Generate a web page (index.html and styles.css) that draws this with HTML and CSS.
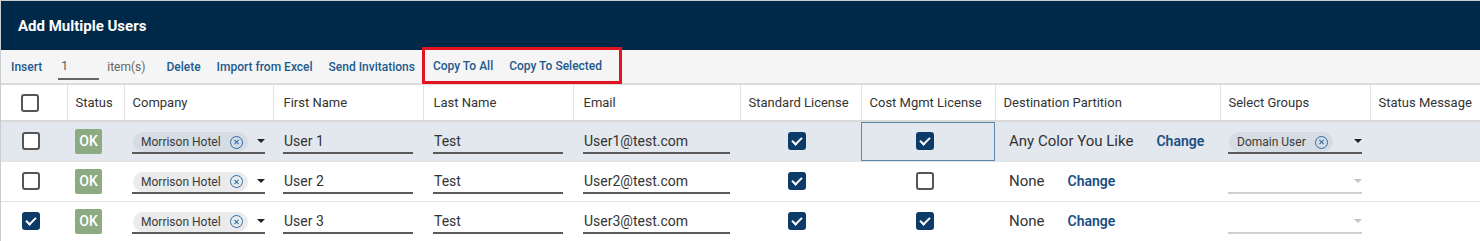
FILE: index.html
```html
<!DOCTYPE html>
<html lang="en">
<head>
    <meta charset="UTF-8">
    <title>Add Multiple Users</title>
    <link rel="stylesheet" href="styles.css">
</head>
<body>

<div class="dialog">
    <div class="titlebar">Add Multiple Users</div>

    <div class="toolbar">
        <a class="tool-link first">Insert</a>
        <span class="count-input">1</span>
        <span class="items-label">item(s)</span>
        <a class="tool-link">Delete</a>
        <a class="tool-link">Import from Excel</a>
        <a class="tool-link">Send Invitations</a>
        <span class="highlight-box">
            <a class="tool-link">Copy To All</a>
            <a class="tool-link">Copy To Selected</a>
        </span>
    </div>

    <table class="grid">
        <colgroup>
            <col style="width:66px">
            <col style="width:57px">
            <col style="width:149px">
            <col style="width:150px">
            <col style="width:150px">
            <col style="width:167px">
            <col style="width:121px">
            <col style="width:134px">
            <col style="width:225px">
            <col style="width:150px">
            <col>
        </colgroup>
        <thead>
            <tr>
                <th class="center"><span class="checkbox"></span></th>
                <th>Status</th>
                <th>Company</th>
                <th class="wide-pad">First Name</th>
                <th class="wide-pad">Last Name</th>
                <th class="wide-pad">Email</th>
                <th>Standard License</th>
                <th>Cost Mgmt License</th>
                <th>Destination Partition</th>
                <th>Select Groups</th>
                <th>Status Message</th>
            </tr>
        </thead>
        <tbody>
            <tr class="selected-row">
                <td class="center"><span class="checkbox"></span></td>
                <td><span class="badge-ok">OK</span></td>
                <td class="field-cell">
                    <div class="field">
                        <span class="chip">Morrison Hotel <span class="chip-x"></span></span>
                        <span class="caret"></span>
                    </div>
                </td>
                <td class="field-cell wide-pad"><div class="field">User 1</div></td>
                <td class="field-cell wide-pad"><div class="field">Test</div></td>
                <td class="field-cell wide-pad"><div class="field">User1@test.com</div></td>
                <td class="center"><span class="checkbox checked"></span></td>
                <td class="center focused"><span class="checkbox checked"></span></td>
                <td class="partition"><span class="partition-name">Any Color You Like</span><a class="change-link">Change</a></td>
                <td class="field-cell">
                    <div class="field">
                        <span class="chip">Domain User <span class="chip-x"></span></span>
                        <span class="caret"></span>
                    </div>
                </td>
                <td></td>
            </tr>
            <tr>
                <td class="center"><span class="checkbox"></span></td>
                <td><span class="badge-ok">OK</span></td>
                <td class="field-cell">
                    <div class="field">
                        <span class="chip">Morrison Hotel <span class="chip-x"></span></span>
                        <span class="caret"></span>
                    </div>
                </td>
                <td class="field-cell wide-pad"><div class="field">User 2</div></td>
                <td class="field-cell wide-pad"><div class="field">Test</div></td>
                <td class="field-cell wide-pad"><div class="field">User2@test.com</div></td>
                <td class="center"><span class="checkbox checked"></span></td>
                <td class="center"><span class="checkbox"></span></td>
                <td class="partition"><span class="partition-name">None</span><a class="change-link">Change</a></td>
                <td class="field-cell">
                    <div class="field empty"><span class="caret"></span></div>
                </td>
                <td></td>
            </tr>
            <tr>
                <td class="center"><span class="checkbox checked"></span></td>
                <td><span class="badge-ok">OK</span></td>
                <td class="field-cell">
                    <div class="field">
                        <span class="chip">Morrison Hotel <span class="chip-x"></span></span>
                        <span class="caret"></span>
                    </div>
                </td>
                <td class="field-cell wide-pad"><div class="field">User 3</div></td>
                <td class="field-cell wide-pad"><div class="field">Test</div></td>
                <td class="field-cell wide-pad"><div class="field">User3@test.com</div></td>
                <td class="center"><span class="checkbox checked"></span></td>
                <td class="center"><span class="checkbox checked"></span></td>
                <td class="partition"><span class="partition-name">None</span><a class="change-link">Change</a></td>
                <td class="field-cell">
                    <div class="field empty"><span class="caret"></span></div>
                </td>
                <td></td>
            </tr>
        </tbody>
    </table>
</div>

</body>
</html>
```

FILE: styles.css
```css
body {
    margin: 0;
    padding: 0;
    font-family: Roboto, "Liberation Sans", Arial, sans-serif;
    color: #333;
    background-color: #fff;
}
.dialog {
    border-left: 1px solid #c9cdd1;
    border-top: 1px solid #c9cdd1;
    overflow: hidden;
}
.titlebar {
    height: 49px;
    display: flex;
    align-items: center;
    padding-left: 17px;
    padding-top: 1px;
    box-sizing: border-box;
    background-color: #002949;
    color: #fff;
    font-size: 15px;
    font-weight: 700;
}
.toolbar {
    height: 33px;
    display: flex;
    align-items: center;
    padding-left: 2px;
    background-color: #f5f5f5;
    border-bottom: 2px solid #dcdcdc;
    font-size: 12px;
}
.tool-link {
    padding: 0 8px;
    color: #1d5a8e;
    font-weight: 500;
    cursor: pointer;
}
.count-input {
    width: 38px;
    margin-left: 8px;
    padding: 0 0 5px 3px;
    margin-top: 5px;
    border-bottom: 2px solid #666;
    color: #555;
}
.items-label {
    margin-left: 8px;
    margin-right: 13px;
    color: #666;
}
.highlight-box {
    display: flex;
    align-items: center;
    align-self: stretch;
    margin: -3px 0 -1px -1px;
    padding: 0 9px 0 0;
    border: 3px solid #e3141f;
}
.highlight-box .tool-link:first-child {
    padding-left: 8px;
}
.grid {
    width: 100%;
    border-collapse: collapse;
    table-layout: fixed;
}
.grid th {
    height: 35px;
    padding: 0 8px;
    text-align: left;
    font-size: 13px;
    font-weight: 400;
    color: #333;
    background-color: #fff;
    border-left: 1px solid #e2e2e2;
    border-bottom: 2px solid #d9d9d9;
    white-space: nowrap;
}
.grid th:first-child {
    border-left: none;
}
.grid tbody tr {
    height: 40px;
}
.grid td {
    padding: 0 8px;
    border-bottom: 1px solid #e4e4e4;
    vertical-align: middle;
    font-size: 14px;
}
.grid .wide-pad {
    padding: 0 10px;
}
.grid td.field-cell {
    vertical-align: top;
    padding-top: 8px;
    padding-bottom: 0;
}
.grid .center {
    text-align: center;
    padding: 0 7px 0 0;
}
.selected-row td {
    background-color: #e2e8ee;
}
.grid td.focused {
    box-shadow: inset 0 0 0 1px #5f87ab;
}
.checkbox {
    display: inline-block;
    width: 14px;
    height: 14px;
    border: 2px solid #555;
    border-radius: 3px;
    background-color: #fff;
    vertical-align: middle;
    position: relative;
}
.checkbox.checked {
    background-color: #0c3b68;
    border-color: #0c3b68;
}
.checkbox.checked::after {
    content: "";
    position: absolute;
    left: 4px;
    top: 1px;
    width: 4px;
    height: 8px;
    border: solid #fff;
    border-width: 0 2px 2px 0;
    transform: rotate(45deg);
}
.badge-ok {
    display: inline-flex;
    align-items: center;
    justify-content: center;
    width: 27px;
    height: 25px;
    background-color: #8dab83;
    color: #fff;
    font-size: 14px;
    font-weight: 500;
    border-radius: 2px;
}
.field {
    height: 22px;
    display: flex;
    align-items: center;
    border-bottom: 2px solid #5a5a5a;
    font-size: 14px;
    color: #333;
    padding-left: 1px;
}
.field.empty {
    border-bottom-color: #cfcfcf;
    justify-content: flex-end;
}
.chip {
    display: inline-flex;
    align-items: center;
    align-self: flex-end;
    height: 20px;
    padding: 0 5px 0 8px;
    border-radius: 10px;
    background-color: #ebebeb;
    font-size: 12px;
    color: #3a3a3a;
    white-space: nowrap;
}
.selected-row .chip {
    background-color: #d5dce3;
}
.chip-x {
    display: inline-block;
    box-sizing: border-box;
    width: 13px;
    height: 13px;
    margin-left: 9px;
    border: 1.2px solid #2a6cab;
    border-radius: 50%;
    position: relative;
}
.chip-x::before,
.chip-x::after {
    content: "";
    position: absolute;
    left: 5px;
    top: 2.5px;
    width: 1.2px;
    height: 6px;
    background-color: #2a6cab;
    transform: rotate(45deg);
}
.chip-x::after {
    transform: rotate(-45deg);
}
.caret {
    margin-left: auto;
    margin-right: 0;
    width: 0;
    height: 0;
    border-left: 4px solid transparent;
    border-right: 4px solid transparent;
    border-top: 4px solid #222;
}
.field.empty .caret {
    border-top-color: #c4c4c4;
}
.partition {
    white-space: nowrap;
}
.partition-name {
    font-size: 15px;
    color: #333;
    margin-left: 6px;
}
.change-link {
    margin-left: 23px;
    font-size: 14px;
    font-weight: 600;
    color: #1b4f82;
    cursor: pointer;
}
```
